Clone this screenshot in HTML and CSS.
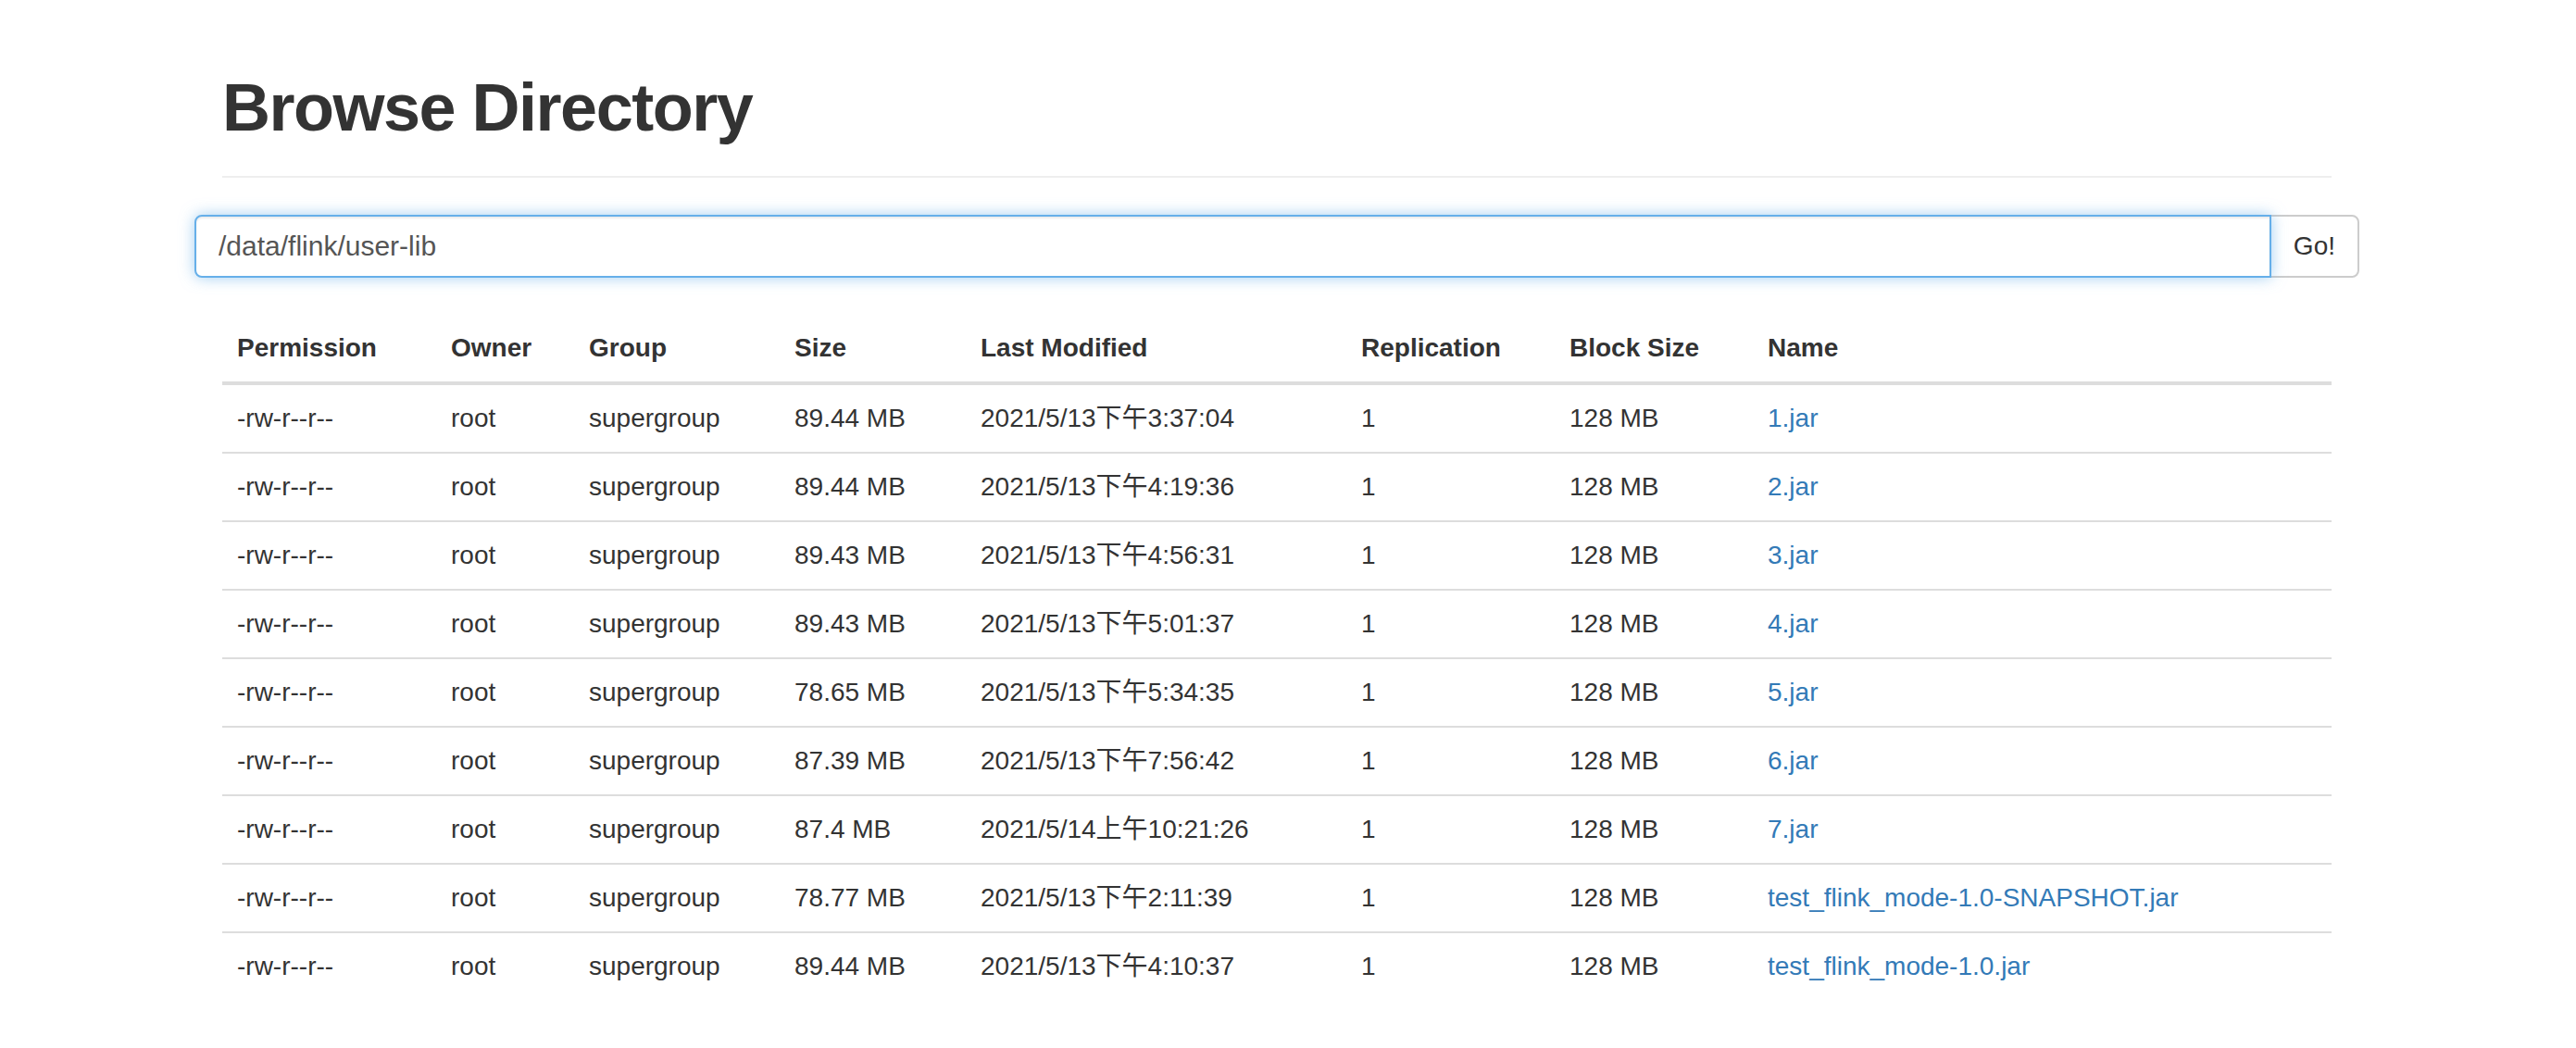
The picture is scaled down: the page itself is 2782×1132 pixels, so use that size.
FILE: index.html
```html
<!DOCTYPE html>
<html lang="zh-CN">
<head>
<meta charset="utf-8">
<title>Browse Directory</title>
<link rel="stylesheet" href="styles.css">
</head>
<body>
<div class="container">
  <div class="page-header">
    <h1>Browse Directory</h1>
  </div>
  <div class="input-group">
    <input class="form-control" type="text" value="/data/flink/user-lib">
    <button class="btn" type="button">Go!</button>
  </div>
  <table class="table">
    <colgroup>
      <col class="c-perm"><col class="c-owner"><col class="c-group"><col class="c-size"><col class="c-mod"><col class="c-rep"><col class="c-block"><col class="c-name">
    </colgroup>
    <thead>
      <tr><th>Permission</th><th>Owner</th><th>Group</th><th>Size</th><th>Last Modified</th><th>Replication</th><th>Block Size</th><th>Name</th></tr>
    </thead>
    <tbody>
      <tr><td>-rw-r--r--</td><td>root</td><td>supergroup</td><td>89.44 MB</td><td>2021/5/13下午3:37:04</td><td>1</td><td>128 MB</td><td><a href="#">1.jar</a></td></tr>
      <tr><td>-rw-r--r--</td><td>root</td><td>supergroup</td><td>89.44 MB</td><td>2021/5/13下午4:19:36</td><td>1</td><td>128 MB</td><td><a href="#">2.jar</a></td></tr>
      <tr><td>-rw-r--r--</td><td>root</td><td>supergroup</td><td>89.43 MB</td><td>2021/5/13下午4:56:31</td><td>1</td><td>128 MB</td><td><a href="#">3.jar</a></td></tr>
      <tr><td>-rw-r--r--</td><td>root</td><td>supergroup</td><td>89.43 MB</td><td>2021/5/13下午5:01:37</td><td>1</td><td>128 MB</td><td><a href="#">4.jar</a></td></tr>
      <tr><td>-rw-r--r--</td><td>root</td><td>supergroup</td><td>78.65 MB</td><td>2021/5/13下午5:34:35</td><td>1</td><td>128 MB</td><td><a href="#">5.jar</a></td></tr>
      <tr><td>-rw-r--r--</td><td>root</td><td>supergroup</td><td>87.39 MB</td><td>2021/5/13下午7:56:42</td><td>1</td><td>128 MB</td><td><a href="#">6.jar</a></td></tr>
      <tr><td>-rw-r--r--</td><td>root</td><td>supergroup</td><td>87.4 MB</td><td>2021/5/14上午10:21:26</td><td>1</td><td>128 MB</td><td><a href="#">7.jar</a></td></tr>
      <tr><td>-rw-r--r--</td><td>root</td><td>supergroup</td><td>78.77 MB</td><td>2021/5/13下午2:11:39</td><td>1</td><td>128 MB</td><td><a href="#">test_flink_mode-1.0-SNAPSHOT.jar</a></td></tr>
      <tr><td>-rw-r--r--</td><td>root</td><td>supergroup</td><td>89.44 MB</td><td>2021/5/13下午4:10:37</td><td>1</td><td>128 MB</td><td><a href="#">test_flink_mode-1.0.jar</a></td></tr>
    </tbody>
  </table>
</div>
</body>
</html>
```

FILE: styles.css
```css
html, body {
  margin: 0;
  padding: 0;
  background: #fff;
}
body {
  font-family: "Liberation Sans", "Noto Sans CJK SC", sans-serif;
  font-size: 28px;
  line-height: 40px;
  color: #333;
}
.container {
  margin-left: 240px;
  width: 2278px;
}
.page-header {
  border-bottom: 2px solid #eee;
  padding-bottom: 18px;
  margin-bottom: 40px;
}
.page-header h1 {
  margin: 77px 0 16px;
  font-size: 72px;
  line-height: 79px;
  font-weight: bold;
  letter-spacing: -1.5px;
  color: #333;
}
.input-group {
  display: flex;
  margin: 0 -30px;
  height: 68px;
}
.form-control {
  flex: 1;
  min-width: 0;
  box-sizing: border-box;
  height: 68px;
  margin: 0;
  padding: 12px 24px;
  font-family: "Liberation Sans", "Noto Sans CJK SC", sans-serif;
  font-size: 30px;
  color: #555;
  background: #fff;
  border: 2px solid #66afe9;
  border-radius: 8px 0 0 8px;
  outline: none;
  box-shadow: inset 0 2px 2px rgba(0, 0, 0, 0.075), 0 0 16px rgba(102, 175, 233, 0.6);
  position: relative;
  z-index: 2;
}
.btn {
  box-sizing: border-box;
  height: 68px;
  margin: 0 0 0 -2px;
  padding: 12px 24px;
  font-family: "Liberation Sans", "Noto Sans CJK SC", sans-serif;
  font-size: 28px;
  line-height: 40px;
  color: #333;
  background: #fff;
  border: 2px solid #ccc;
  border-radius: 0 8px 8px 0;
}
.table {
  width: 100%;
  margin-top: 40px;
  border-collapse: collapse;
  border-spacing: 0;
  table-layout: fixed;
}
.c-perm { width: 231px; }
.c-owner { width: 149px; }
.c-group { width: 222px; }
.c-size { width: 201px; }
.c-mod { width: 411px; }
.c-rep { width: 225px; }
.c-block { width: 214px; }
.c-name { width: auto; }
.table th {
  text-align: left;
  font-weight: bold;
  padding: 16px;
  line-height: 40px;
  border-bottom: 4px solid #ddd;
  white-space: nowrap;
}
.table td {
  padding: 16px;
  line-height: 40px;
  border-top: 2px solid #ddd;
  white-space: nowrap;
}
.table a {
  color: #337ab7;
  text-decoration: none;
}
```
